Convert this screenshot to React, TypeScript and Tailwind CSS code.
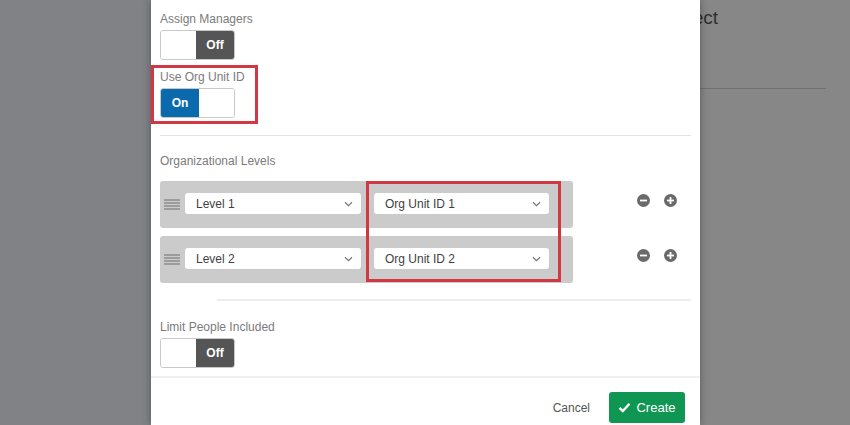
import React from "react";

const font = { fontFamily: '"Liberation Sans", Arial, sans-serif' };

const Toggle = ({ on }: { on: boolean }) => {
  if (on) {
    return (
      <div className="flex h-[30px] w-[75px] overflow-hidden rounded-[3px] border border-[#c8c8c8]">
        <div className="flex w-[38px] items-center justify-center bg-[#0b6aad] text-[12px] font-bold text-white">
          On
        </div>
        <div className="flex-1 bg-white" />
      </div>
    );
  }
  return (
    <div className="flex h-[30px] w-[75px] overflow-hidden rounded-[3px] border border-[#c8c8c8]">
      <div className="flex-1 bg-white" />
      <div className="flex w-[38px] items-center justify-center bg-[#555555] text-[12px] font-bold text-white">
        Off
      </div>
    </div>
  );
};

const Label = ({ children }: { children: React.ReactNode }) => (
  <div className="text-[12px] leading-[14px] text-[#7b7b7b]">{children}</div>
);

const Chevron = () => (
  <svg width="9" height="6" viewBox="0 0 9 6" className="text-[#777]">
    <path d="M1 1.2 L4.5 4.6 L8 1.2" fill="none" stroke="currentColor" strokeWidth="1.2" />
  </svg>
);

const Select = ({ value, width }: { value: string; width: string }) => (
  <div
    className={`flex h-[21px] ${width} items-center justify-between rounded-[3px] bg-white pl-[11px] pr-[8px] text-[12px] text-[#3f3f3f]`}
  >
    <span>{value}</span>
    <Chevron />
  </div>
);

const Handle = () => (
  <div className="flex w-[16px] flex-col gap-[1px]">
    {[0, 1, 2, 3].map((i) => (
      <div key={i} className="h-[2px] bg-[#9c9c9c]" />
    ))}
  </div>
);

const RoundIcon = ({ plus }: { plus?: boolean }) => (
  <svg width="13" height="13" viewBox="0 0 13 13">
    <circle cx="6.5" cy="6.5" r="6.5" fill="#6a6a6a" />
    <rect x="3" y="5.6" width="7" height="1.8" fill="#fff" />
    {plus && <rect x="5.6" y="3" width="1.8" height="7" fill="#fff" />}
  </svg>
);

const LevelRow = ({ level, unit }: { level: string; unit: string }) => (
  <div className="flex items-start">
    <div className="flex h-[47px] w-[413px] items-start gap-[5px] rounded-[3px] bg-[#cbcbcb] pl-[4px] pt-[12px]">
      <div className="pt-[6px]">
        <Handle />
      </div>
      <Select value={level} width="w-[176px]" />
      <div className="w-[3px]" />
      <Select value={unit} width="w-[175px]" />
    </div>
    <div className="ml-[64px] flex gap-[14px] pt-[13px]">
      <RoundIcon />
      <RoundIcon plus />
    </div>
  </div>
);

export default function App() {
  return (
    <div className="relative h-[425px] w-[850px] overflow-hidden bg-[#878787]" style={font}>
      {/* page behind the dialog */}
      <div className="flex h-full">
        <div className="w-[151px] bg-[#818285]" />
        <div className="flex-1 pt-[6px]">
          <div className="pl-[508px] text-[19px] leading-[24px] text-[#2e2e2e]">Project</div>
          <div className="ml-[20px] mr-[24px] mt-[58px] h-px bg-[#707070]" />
        </div>
      </div>

      {/* dialog */}
      <div className="absolute left-[151px] top-0 flex h-full w-[549px] flex-col bg-white shadow-[0_0_8px_rgba(0,0,0,0.35)]">
        <div className="px-[9px] pt-[12px]">
          <Label>Assign Managers</Label>
          <div className="mt-[4px]">
            <Toggle on={false} />
          </div>

          <div className="-ml-[9px] mt-[5px] w-[107px] border-[3px] border-[#d23843] pb-[3px] pl-[6px] pt-[2px]">
            <Label>Use Org Unit ID</Label>
            <div className="mt-[4px]">
              <Toggle on />
            </div>
          </div>

          <div className="mt-[11px] h-px bg-[#e4e4e4]" />

          <div className="mt-[18px]">
            <Label>Organizational Levels</Label>
          </div>

          <div className="relative mt-[13px] flex flex-col gap-[8px]">
            <LevelRow level="Level 1" unit="Org Unit ID 1" />
            <LevelRow level="Level 2" unit="Org Unit ID 2" />
            <div className="absolute left-[206px] top-0 h-[101px] w-[195px] border-[3px] border-[#d23843]" />
          </div>

          <div className="ml-[57px] mt-[16px] h-[2px] bg-[#eeeeee]" />

          <div className="mt-[19px]">
            <Label>Limit People Included</Label>
          </div>
          <div className="mt-[4px]">
            <Toggle on={false} />
          </div>
        </div>

        <div className="mt-[8px] h-[2px] bg-[#f0f0f0]" />

        <div className="flex items-center justify-end gap-[19px] pr-[15px] pt-[14px]">
          <span className="text-[12px] text-[#555]">Cancel</span>
          <div className="flex h-[31px] w-[76px] items-center justify-center gap-[5px] rounded-[3px] bg-[#0f9652] text-[13px] text-white">
            <svg width="13" height="11" viewBox="0 0 13 11">
              <path d="M1.5 5.8 L4.8 9 L11.5 1.8" fill="none" stroke="#fff" strokeWidth="2.4" />
            </svg>
            <span>Create</span>
          </div>
        </div>
      </div>
    </div>
  );
}
